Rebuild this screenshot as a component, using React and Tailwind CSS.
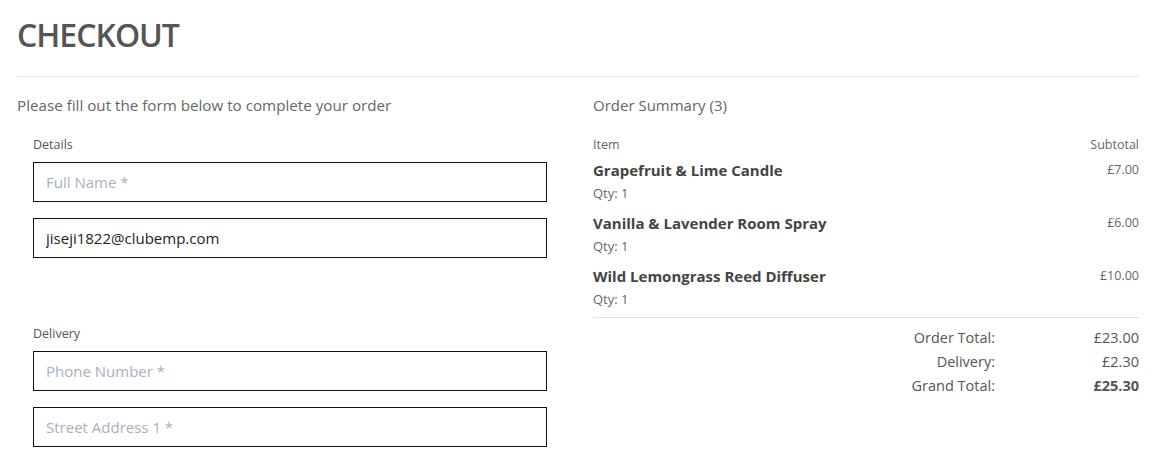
import React from "react";

const items = [
  { name: "Grapefruit & Lime Candle", qty: 1, price: "£7.00" },
  { name: "Vanilla & Lavender Room Spray", qty: 1, price: "£6.00" },
  { name: "Wild Lemongrass Reed Diffuser", qty: 1, price: "£10.00" },
];

function Field({ placeholder, value }) {
  return (
    <input
      type="text"
      placeholder={placeholder}
      defaultValue={value}
      className="block w-full h-[40px] border border-[#111] px-3 text-[15px] text-[#222] placeholder:text-[#a5b1c2] outline-none"
    />
  );
}

export default function App() {
  return (
    <div className="min-h-screen bg-white pl-[17px] pr-[19px] pt-[15px] font-['Open_Sans',sans-serif] text-[#666]">
      {/* HEADER */}
      <h1 className="text-[32px] leading-[40px] font-semibold text-[#555] tracking-[-1px]">CHECKOUT</h1>
      <hr className="mt-[21px] border-t border-[#e2e2e2]" />

      <div className="grid grid-cols-2 gap-x-[30px] mt-[16px]">
        {/* FORM */}
        <div>
          <p className="text-[15.2px] leading-[24px]">Please fill out the form below to complete your order</p>
          <div className="px-4">
            <p className="mt-[19px] text-[12.5px] leading-[18px] text-[#555]">Details</p>
            <div className="mt-[8px] space-y-[16px]">
              <Field placeholder="Full Name *" />
              <Field value="jiseji1822@clubemp.com" />
            </div>
            <p className="mt-[67px] text-[12.5px] leading-[18px] text-[#555]">Delivery</p>
            <div className="mt-[8px] space-y-[16px]">
              <Field placeholder="Phone Number *" />
              <Field placeholder="Street Address 1 *" />
            </div>
          </div>
        </div>

        {/* SUMMARY */}
        <div>
          <p className="text-[15px] leading-[24px]">Order Summary (3)</p>
          <div className="mt-[19px] flex justify-between text-[12.5px] leading-[18px]">
            <span>Item</span>
            <span>Subtotal</span>
          </div>
          <div className="mt-[6px]">
            {items.map((it) => (
              <div key={it.name} className="flex justify-between h-[53px]">
                <div>
                  <p className="text-[15px] leading-[20px] font-bold text-[#444]">{it.name}</p>
                  <p className="mt-[4px] text-[13px] leading-[18px]">Qty: {it.qty}</p>
                </div>
                <p className="mt-[1px] text-[12.5px] leading-[18px]">{it.price}</p>
              </div>
            ))}
          </div>
          <hr className="mt-[-2px] border-t border-[#e2e2e2]" />
          <div className="mt-[8px] text-[14.5px] leading-[24px] text-[#555]">
            <div className="grid grid-cols-[1fr_144px] text-right">
              <span>Order Total:</span>
              <span>£23.00</span>
              <span>Delivery:</span>
              <span>£2.30</span>
              <span>Grand Total:</span>
              <span className="font-bold">£25.30</span>
            </div>
          </div>
        </div>
      </div>
    </div>
  );
}
